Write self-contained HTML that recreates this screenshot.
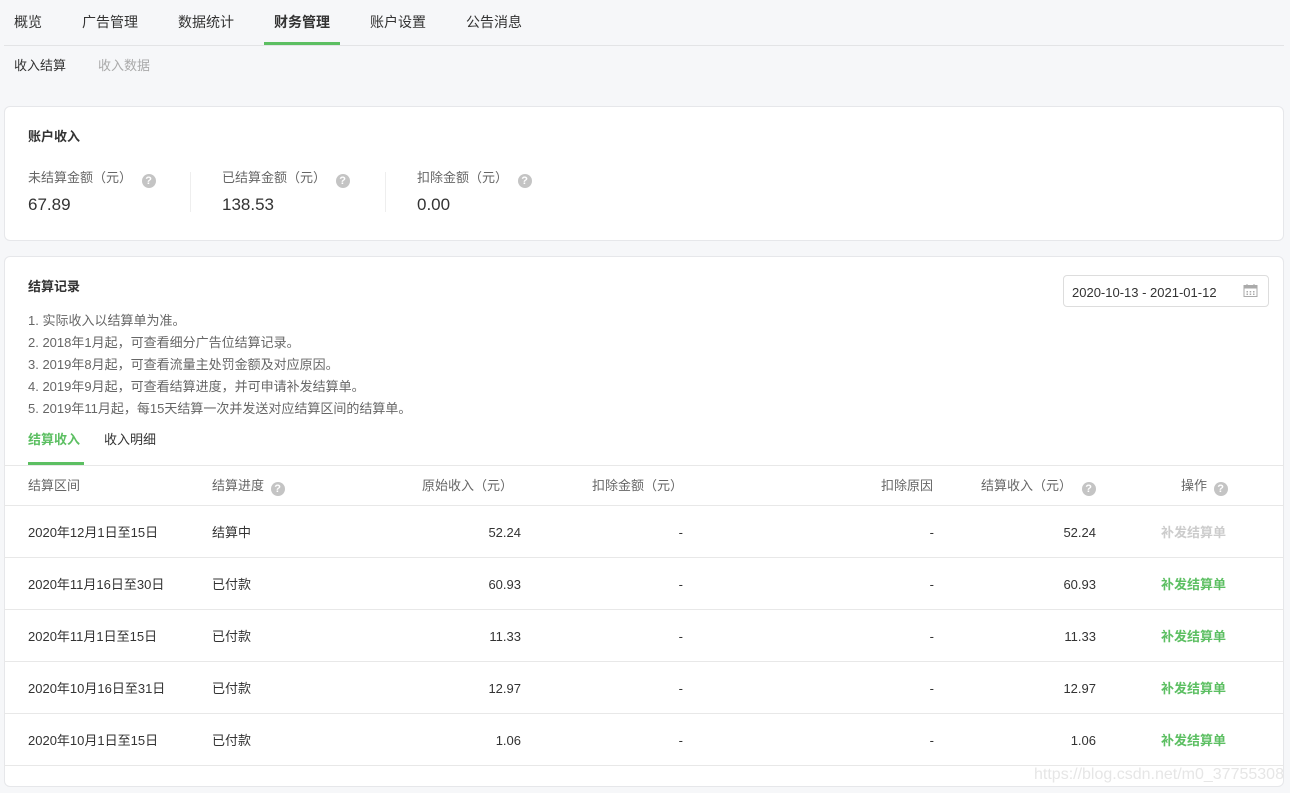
<!DOCTYPE html>
<html><head><meta charset="utf-8">
<style>
*{margin:0;padding:0;box-sizing:border-box}
body{width:1290px;height:793px;background:#f6f7f9;font-family:"Liberation Sans","Noto Sans CJK SC",sans-serif;font-size:13px;color:#333;position:relative;overflow:hidden}
.a{position:absolute;white-space:nowrap;line-height:18px}
.card{position:absolute;left:4px;width:1280px;background:#fff;border:1px solid #e6e7ea;border-radius:6px}
.q{display:inline-block;width:14px;height:14px;border-radius:50%;background:#c4c4c4;color:#fff;font-size:11px;line-height:14px;text-align:center;font-weight:bold;vertical-align:-2px}
.hl{position:absolute;left:4px;width:1280px;height:1px;background:#e8e8e8}
.r{text-align:right}
.g{color:#5cbf62;font-weight:bold}
.gray{color:#999}
</style></head><body>
<div class="a" style="left:14px;top:13px;font-size:14px">概览</div>
<div class="a" style="left:82px;top:13px;font-size:14px">广告管理</div>
<div class="a" style="left:178px;top:13px;font-size:14px">数据统计</div>
<div class="a" style="left:274px;top:13px;font-size:14px;font-weight:bold">财务管理</div>
<div class="a" style="left:370px;top:13px;font-size:14px">账户设置</div>
<div class="a" style="left:466px;top:13px;font-size:14px">公告消息</div>
<div style="position:absolute;left:4px;top:45px;width:1280px;height:1px;background:#e3e4e6"></div>
<div style="position:absolute;left:264px;top:42px;width:76px;height:3px;background:#5cbf62"></div>
<div class="a" style="left:14px;top:57px">收入结算</div>
<div class="a gray" style="left:98px;top:57px;color:#aaa">收入数据</div>

<div class="card" style="top:106px;height:135px"></div>
<div class="a" style="left:28px;top:128px;font-weight:bold">账户收入</div>
<div class="a" style="left:28px;top:169px;color:#666">未结算金额（元） <span class="q" style="margin-left:6px">?</span></div>
<div class="a" style="left:28px;top:195px;font-size:17px;line-height:20px">67.89</div>
<div style="position:absolute;left:190px;top:172px;width:1px;height:40px;background:#eee"></div>
<div class="a" style="left:222px;top:169px;color:#666">已结算金额（元） <span class="q" style="margin-left:6px">?</span></div>
<div class="a" style="left:222px;top:195px;font-size:17px;line-height:20px">138.53</div>
<div style="position:absolute;left:385px;top:172px;width:1px;height:40px;background:#eee"></div>
<div class="a" style="left:417px;top:169px;color:#666">扣除金额（元） <span class="q" style="margin-left:6px">?</span></div>
<div class="a" style="left:417px;top:195px;font-size:17px;line-height:20px">0.00</div>

<div class="card" style="top:256px;height:531px"></div>
<div class="a" style="left:28px;top:278px;font-weight:bold">结算记录</div>
<div style="position:absolute;left:1063px;top:275px;width:206px;height:32px;border:1px solid #ddd;border-radius:4px"></div>
<div class="a" style="left:1072px;top:284px">2020-10-13 - 2021-01-12</div>
<svg style="position:absolute;left:1243px;top:283px" width="15" height="15" viewBox="0 0 15 15"><rect x="1" y="2.5" width="13" height="11" fill="none" stroke="#aaa"/><rect x="1" y="2.5" width="13" height="3" fill="#aaa"/><line x1="4" y1="1" x2="4" y2="3" stroke="#aaa"/><line x1="11" y1="1" x2="11" y2="3" stroke="#aaa"/><g fill="#aaa"><rect x="3.5" y="8" width="1.5" height="1.5"/><rect x="6.7" y="8" width="1.5" height="1.5"/><rect x="10" y="8" width="1.5" height="1.5"/><rect x="3.5" y="10.5" width="1.5" height="1.5"/><rect x="6.7" y="10.5" width="1.5" height="1.5"/><rect x="10" y="10.5" width="1.5" height="1.5"/></g></svg>
<div class="a" style="left:28px;top:310px;color:#666;line-height:22px">1. 实际收入以结算单为准。<br>2. 2018年1月起，可查看细分广告位结算记录。<br>3. 2019年8月起，可查看流量主处罚金额及对应原因。<br>4. 2019年9月起，可查看结算进度，并可申请补发结算单。<br>5. 2019年11月起，每15天结算一次并发送对应结算区间的结算单。</div>
<div class="a g" style="left:28px;top:431px">结算收入</div>
<div class="a" style="left:104px;top:431px">收入明细</div>
<div style="position:absolute;left:28px;top:462px;width:56px;height:3px;background:#5cbf62"></div>
<div class="hl" style="top:465px"></div>
<div class="a" style="left:28px;top:477px;color:#666">结算区间</div>
<div class="a" style="left:212px;top:477px;color:#666">结算进度 <span class="q" style="margin-left:3px">?</span></div>
<div class="a r" style="left:400px;width:113px;top:477px;color:#666">原始收入（元）</div>
<div class="a" style="left:592px;top:477px;color:#666">扣除金额（元）</div>
<div class="a r" style="left:800px;width:133px;top:477px;color:#666">扣除原因</div>
<div class="a" style="left:981px;top:477px;color:#666">结算收入（元） <span class="q" style="margin-left:6px">?</span></div>
<div class="a" style="left:1181px;top:477px;color:#666">操作 <span class="q" style="margin-left:3px">?</span></div>
<div class="hl" style="top:505px"></div>

<div class="a" style="left:28px;top:524px">2020年12月1日至15日</div><div class="a" style="left:212px;top:524px">结算中</div><div class="a r" style="left:400px;width:121px;top:524px">52.24</div><div class="a r" style="left:600px;width:83px;top:524px">-</div><div class="a r" style="left:850px;width:84px;top:524px">-</div><div class="a r" style="left:1000px;width:96px;top:524px">52.24</div><div class="a" style="left:1161px;top:524px;color:#ccc;font-weight:bold">补发结算单</div>
<div class="hl" style="top:557px"></div>
<div class="a" style="left:28px;top:576px">2020年11月16日至30日</div><div class="a" style="left:212px;top:576px">已付款</div><div class="a r" style="left:400px;width:121px;top:576px">60.93</div><div class="a r" style="left:600px;width:83px;top:576px">-</div><div class="a r" style="left:850px;width:84px;top:576px">-</div><div class="a r" style="left:1000px;width:96px;top:576px">60.93</div><div class="a g" style="left:1161px;top:576px">补发结算单</div>
<div class="hl" style="top:609px"></div>
<div class="a" style="left:28px;top:628px">2020年11月1日至15日</div><div class="a" style="left:212px;top:628px">已付款</div><div class="a r" style="left:400px;width:121px;top:628px">11.33</div><div class="a r" style="left:600px;width:83px;top:628px">-</div><div class="a r" style="left:850px;width:84px;top:628px">-</div><div class="a r" style="left:1000px;width:96px;top:628px">11.33</div><div class="a g" style="left:1161px;top:628px">补发结算单</div>
<div class="hl" style="top:661px"></div>
<div class="a" style="left:28px;top:680px">2020年10月16日至31日</div><div class="a" style="left:212px;top:680px">已付款</div><div class="a r" style="left:400px;width:121px;top:680px">12.97</div><div class="a r" style="left:600px;width:83px;top:680px">-</div><div class="a r" style="left:850px;width:84px;top:680px">-</div><div class="a r" style="left:1000px;width:96px;top:680px">12.97</div><div class="a g" style="left:1161px;top:680px">补发结算单</div>
<div class="hl" style="top:713px"></div>
<div class="a" style="left:28px;top:732px">2020年10月1日至15日</div><div class="a" style="left:212px;top:732px">已付款</div><div class="a r" style="left:400px;width:121px;top:732px">1.06</div><div class="a r" style="left:600px;width:83px;top:732px">-</div><div class="a r" style="left:850px;width:84px;top:732px">-</div><div class="a r" style="left:1000px;width:96px;top:732px">1.06</div><div class="a g" style="left:1161px;top:732px">补发结算单</div>
<div class="hl" style="top:765px"></div>
<div class="a" style="left:1034px;top:765px;font-size:16px;line-height:20px;color:#e6e6e6">https://blog.csdn.net/m0_37755308</div>
</body></html>
